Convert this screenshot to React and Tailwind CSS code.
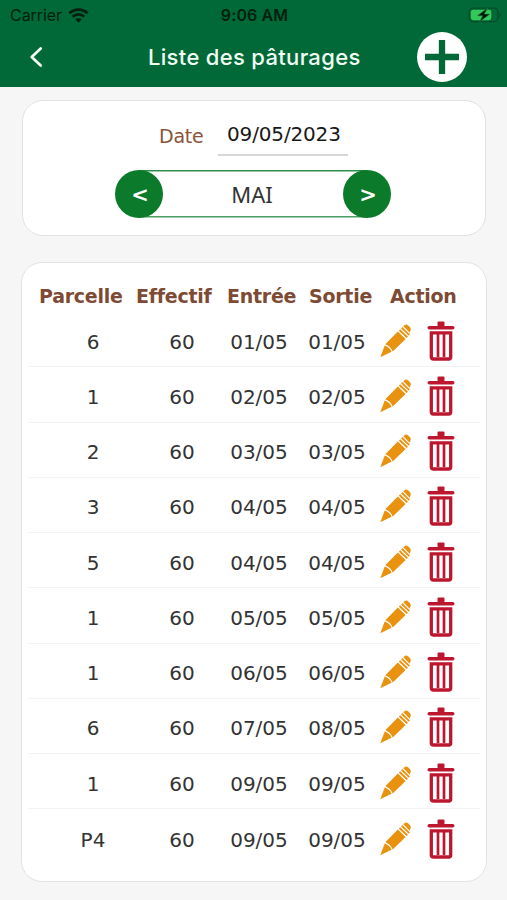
const rows = [
  ['6', '60', '01/05', '01/05'],
  ['1', '60', '02/05', '02/05'],
  ['2', '60', '03/05', '03/05'],
  ['3', '60', '04/05', '04/05'],
  ['5', '60', '04/05', '04/05'],
  ['1', '60', '05/05', '05/05'],
  ['1', '60', '06/05', '06/05'],
  ['6', '60', '07/05', '08/05'],
  ['1', '60', '09/05', '09/05'],
  ['P4', '60', '09/05', '09/05'],
];

function Wifi() {
  return (
    <svg className="ml-[6px] h-[15px] w-[21px]" viewBox="0 0 21 15" fill="none" stroke="#03200f" strokeWidth="2.7">
      <path d="M1.3 5.3C6.5.3 14.5.3 19.7 5.3" />
      <path d="M4.6 8.8c3.4-3.2 8.4-3.2 11.8 0" />
      <path d="M10.5 14.6 7.2 11.4c1.9-1.7 4.7-1.7 6.6 0z" fill="#03200f" stroke="none" />
    </svg>
  );
}

function Battery() {
  return (
    <svg className="h-[16px] w-[34px]" viewBox="0 0 34 16">
      <rect x="1.1" y="1.1" width="28.8" height="13.6" rx="4" fill="none" stroke="#044d28" strokeWidth="1.3" />
      <path d="M31.5 5.5c1.5.7 1.5 4.2 0 5z" fill="#044d28" />
      <rect x="2.8" y="2.8" width="20.5" height="10.4" rx="2.4" fill="#34c759" />
      <path d="M19.6 1 9.3 8.8h5.3L11.6 14.8 22 7.1h-5.6z" fill="#02150a" stroke="#1c9445" strokeWidth=".5" />
    </svg>
  );
}

function Pencil() {
  return (
    <svg className="h-[34px] w-[32px]" viewBox="0 0 32 34" fill="#e8920f">
      <path d="M1.3 33.2 5.7 21.4C8.8 22.2 11.8 25 12.5 27.8z" />
      <path d="M6.3 20.3 18.8 7.6l7.8 7.5-12.9 12.5c-1-3.2-4-6.2-7.4-7.3z" />
      <path d="m19.8 6.7 1.4-1.4 7.8 7.4-1.4 1.4z" />
      <path d="m22.1 4.4 1.3-1.3 7.5 7.3-1.1 1.4z" />
      <path d="m24.3 2.3 1.1-1.1c1.1-1.1 2.5-1.1 3.6 0l1.8 1.9c1.2 1.2 1.2 2.8.5 3.9l-.6 1.8z" />
    </svg>
  );
}

function Trash() {
  return (
    <svg className="h-[40px] w-[28px]" viewBox="0 0 28 40" fill="none" stroke="#bd1730">
      <rect x="10.5" y=".4" width="7" height="4.8" rx="1" fill="#bd1730" stroke="none" />
      <rect x=".5" y="4.9" width="27" height="3.7" rx="1.8" fill="#bd1730" stroke="none" />
      <path d="M4.3 11.9h19.4v24q0 2.1-2.1 2.1H6.4q-2.1 0-2.1-2.1z" strokeWidth="3.3" />
      <path d="M11 12v24M17 12v24" strokeWidth="2.7" />
    </svg>
  );
}

export default function App() {
  return (
    <div className="flex h-[900px] w-[507px] flex-col overflow-hidden bg-[#f6f6f6] font-['DejaVu_Sans',Verdana,sans-serif] text-[#333]">
      <header className="h-[87px] shrink-0 bg-[#006937] font-[Inter,sans-serif]">
        <div className="grid h-[30px] grid-cols-3 items-center pl-[10px] pr-[5px] text-[16px] text-[#03200f]">
          <div className="flex items-center">
            <span className="tracking-[-0.05px]">Carrier</span>
            <Wifi />
          </div>
          <span className="-ml-[3px] text-center font-semibold tracking-[0.1px]">9:06 AM</span>
          <div className="flex justify-end"><Battery /></div>
        </div>
        <div className="flex h-[54px] items-center">
          <button className="ml-[29px] h-[22px] w-[14px]" aria-label="Retour">
            <svg className="h-[22px] w-[14px]" viewBox="0 0 14 22" fill="none" stroke="#f2fff5" strokeWidth="2.7" strokeLinecap="round" strokeLinejoin="round">
              <path d="m11.7 2.5-9 8.5 9 8.5" />
            </svg>
          </button>
          <h1 className="ml-[105px] w-[212px] whitespace-nowrap text-[22px] font-medium tracking-[0.32px] text-[#f2fff5]">Liste des pâturages</h1>
          <button className="ml-[57px] h-[50px] w-[50px] rounded-full bg-white" aria-label="Ajouter">
            <svg className="h-[50px] w-[50px]" viewBox="0 0 50 50" stroke="#006937" strokeWidth="6.3">
              <path d="M8 25h34M25 8v34" />
            </svg>
          </button>
        </div>
      </header>

      <section className="ml-[22px] mt-[13px] h-[136px] w-[464px] shrink-0 rounded-[21px] border border-[#e2e2e2] bg-white">
        <div className="flex pl-[136px] pt-[14px]">
          <label className="mt-[9px] w-[59px] text-[19px] leading-[24px] tracking-[-0.2px] text-[#8a533a]">Date</label>
          <div className="h-[41px] w-[130px] border-b-2 border-[#d7d7d7] pl-[9px] pt-[6px] text-[20px] leading-[26px] tracking-[-0.15px] text-[#181818]">09/05/2023</div>
        </div>
        <div className="ml-[92px] mt-[14px] flex h-[48px] w-[276px] items-center justify-between bg-[linear-gradient(#318f4c,#318f4c),linear-gradient(#4a9d62,#4a9d62)] bg-[length:228px_1.5px] bg-[position:24px_0px,24px_46px] bg-no-repeat">
          <button className="h-[48px] w-[48px] shrink-0 rounded-full bg-[#0b7a2a] pl-[2px] pt-[3px] text-[21px] font-bold text-white">&lt;</button>
          <span className="-ml-[2px] font-['Noto_Sans',sans-serif] text-[22px]">MAI</span>
          <button className="h-[48px] w-[48px] shrink-0 rounded-full bg-[#0b7a2a] pl-[2px] pt-[3px] text-[21px] font-bold text-white">&gt;</button>
        </div>
      </section>

      <section className="ml-[21px] mt-[26px] h-[620px] w-[466px] shrink-0 rounded-[21px] border border-[#e2e2e2] bg-white px-[6px] pt-[16px]">
        <div className="grid h-[33px] grid-cols-[108px_78px_91px_72px_90px] pl-[10px] pt-[5px] text-[19px] font-bold leading-[24px] tracking-[-0.25px] text-[#7e4a33]">
          <span className="pl-px">Parcelle</span>
          <span className="-ml-[10px]">Effectif</span>
          <span className="pl-[3px]">Entrée</span>
          <span className="-ml-[6px]">Sortie</span>
          <span className="pl-[3px]">Action</span>
        </div>
        {rows.map((row, i) => (
          <div key={i} className={`grid h-[55.28px] grid-cols-[106px_72px_82px_74px_116px] items-center pl-[12px] pt-[5px] text-[20px] ${i < 9 ? 'border-b border-[#f3f3f3]' : ''}`}>
            <span className="text-center">{row[0]}</span>
            <span className="text-center">{row[1]}</span>
            <span className="text-center">{row[2]}</span>
            <span className="text-center">{row[3]}</span>
            <div className="-mt-[2px] flex items-center pl-[5px]">
              <Pencil />
              <span className="ml-[16px]"><Trash /></span>
            </div>
          </div>
        ))}
      </section>
    </div>
  );
}
